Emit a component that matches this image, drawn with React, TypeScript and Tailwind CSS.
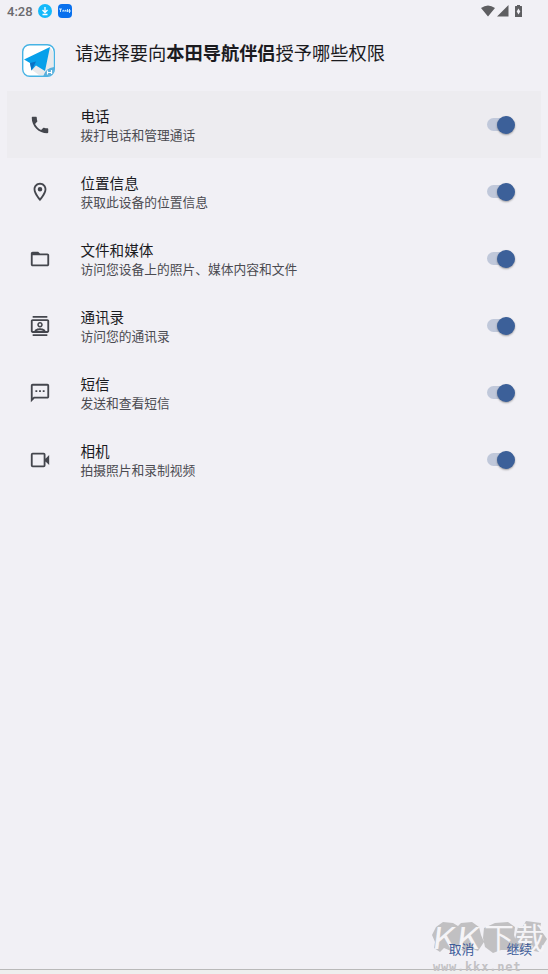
import React from 'react'

interface PermissionProps {
  title: string
  desc: string
  icon: React.ReactNode
  active?: boolean
}

function Icon(props: { d: string }) {
  return (
    <svg className="w-[22px] h-[22px] fill-[#44464d]" viewBox="0 0 24 24">
      <path fillRule="evenodd" d={props.d} />
    </svg>
  )
}

function Toggle() {
  return (
    <div className="flex items-center w-7 h-5">
      <div className="w-5 h-[13px] rounded-full bg-[#c0c8da]"></div>
      <div className="w-[18px] h-[18px] shrink-0 -ml-2.5 rounded-full bg-[#3c6099] shadow-[0_1px_2px_rgba(0,0,0,0.35)]"></div>
    </div>
  )
}

function Permission(props: PermissionProps) {
  return (
    <div
      className={`flex items-center h-[67px] mx-[7px] pl-[22px] pr-[26px] ${props.active ? 'bg-[#edecf0]' : ''}`}
    >
      {props.icon}
      <div className="flex-1 ml-[29.4px]">
        <div className="text-[14.6px] leading-5 text-[#1b1b1f]">{props.title}</div>
        <div className="text-[12.75px] leading-[18px] text-[#4b4b51]">{props.desc}</div>
      </div>
      <Toggle />
    </div>
  )
}

const permissions = [
  {
    title: '电话',
    desc: '拨打电话和管理通话',
    d: 'M6.62 10.79c1.44 2.83 3.76 5.14 6.59 6.59l2.2-2.2c.27-.27.67-.36 1.02-.24 1.12.37 2.33.57 3.57.57.55 0 1 .45 1 1V20c0 .55-.45 1-1 1-9.39 0-17-7.61-17-17 0-.55.45-1 1-1h3.5c.55 0 1 .45 1 1 0 1.25.2 2.45.57 3.57.11.35.03.74-.25 1.02l-2.2 2.2z'
  },
  {
    title: '位置信息',
    desc: '获取此设备的位置信息',
    d: 'M12 2C8.13 2 5 5.13 5 9c0 5.25 7 13 7 13s7-7.75 7-13c0-3.87-3.13-7-7-7zM7 9c0-2.76 2.24-5 5-5s5 2.24 5 5c0 2.88-2.88 7.19-5 9.88C9.92 16.21 7 11.85 7 9zM12 6.5a2.5 2.5 0 1 0 0 5 2.5 2.5 0 0 0 0-5z'
  },
  {
    title: '文件和媒体',
    desc: '访问您设备上的照片、媒体内容和文件',
    d: 'M20 6h-8l-2-2H4c-1.1 0-1.99.9-1.99 2L2 18c0 1.1.9 2 2 2h16c1.1 0 2-.9 2-2V8c0-1.1-.9-2-2-2zm0 12H4V8h16v10z'
  },
  {
    title: '通讯录',
    desc: '访问您的通讯录',
    d: 'M4 1h16v2H4zM4 21h16v2H4zM20 4.5H4c-1.1 0-2 .9-2 2v11c0 1.1.9 2 2 2h16c1.1 0 2-.9 2-2v-11c0-1.1-.9-2-2-2zM8.21 17.5c.8-.6 2.3-1 3.79-1s2.99.4 3.79 1H8.21zM20 17.5h-2c-.34-2.1-3.64-3-6-3s-5.66.9-6 3H4v-11h16v11zM12 13.5c1.7 0 3-1.3 3-3s-1.3-3-3-3-3 1.3-3 3 1.3 3 3 3zm0-4.3a1.3 1.3 0 1 1 0 2.6 1.3 1.3 0 0 1 0-2.6z'
  },
  {
    title: '短信',
    desc: '发送和查看短信',
    d: 'M20 2H4c-1.1 0-2 .9-2 2v18l4-4h14c1.1 0 2-.9 2-2V4c0-1.1-.9-2-2-2zm0 14H5.17L4 17.17V4h16v12zM7 9h2v2H7zM11 9h2v2h-2zM15 9h2v2h-2z'
  },
  {
    title: '相机',
    desc: '拍摄照片和录制视频',
    d: 'M4 4h12a2 2 0 0 1 2 2v4.5l4-4v11l-4-4V18a2 2 0 0 1-2 2H4a2 2 0 0 1-2-2V6a2 2 0 0 1 2-2zm0 2v12h12V6H4z'
  }
]

function StatusBar() {
  return (
    <div className="flex items-center h-[23px] pl-[7px] pr-[25px]">
      <div className="w-[31px] font-[Roboto,sans-serif] font-medium text-[13px] leading-4 text-[#6a6a6e]">4:28</div>
      <svg className="w-3.5 h-3.5 -mt-px" viewBox="0 0 14 14">
        <circle cx="7" cy="7" r="7" fill="#13b9fb" />
        <path d="M7 3v5M4.5 6 7 8.5 9.5 6M4.5 10.5h5" fill="none" stroke="#fff" strokeWidth="1.3" />
      </svg>
      <div className="flex items-center justify-center w-3.5 h-3.5 -mt-px ml-1.5 rounded-sm bg-[#0870ed]">
        <svg className="w-3 h-1.5" viewBox="0 0 12 6">
          <path d="M0 1h3M1.5 1v3M4 4V2l1.500 1L7 2v2M8.5 1v3M8.5 3H12M10.5 1v4" fill="none" stroke="#d9f3ff" strokeWidth="0.9" />
        </svg>
      </div>
      <svg className="w-[42px] h-3 -mt-0.5 ml-auto fill-[#5e5e61]" viewBox="0 0 42 12">
        <path d="M0 3Q7 -2 14 3L7 11.5ZM27.500 0v11.5H16ZM34.500 1H36V0h3v1h1.500q.5 0 .5.5v10q0 .5-.5.5H34.500q-.5 0-.5-.5v-10q0-.5.5-.5Z" />
        <path className="fill-[#f1f0f5]" d="M37.500 3.500 39.300 6.500 37.500 9.500 35.700 6.500Z" />
      </svg>
    </div>
  )
}

function AppLogo() {
  return (
    <svg className="w-[33px] h-[33px]" viewBox="0 0 33 33">
      <defs>
        <clipPath id="tile">
          <rect x="1" y="1" width="31" height="31" rx="6" />
        </clipPath>
      </defs>
      <rect x="0.7" y="0.7" width="31.6" height="31.6" rx="7" fill="#fff" stroke="#47b3e4" strokeWidth="1.4" />
      <g clipPath="url(#tile)">
        <path d="M28 3 31.3 8V31H17L10 26Z" fill="#e9e9eb" />
        <path d="M21 33q2-9 12-10v10Z" fill="#5aafdc" />
        <path d="M25.5 26.5v4M29.5 26v4M25.5 28.5h4" fill="none" stroke="#fff" strokeWidth="1.2" />
        <path d="M2 15.5 28 3 23 27 14 21.5 9.5 26.5 8 19Z" fill="#07a0ea" />
        <path d="M8 19 14 17.500 12.500 20.500 9.5 26.5Z" fill="#0871c4" />
      </g>
    </svg>
  )
}

function Watermark() {
  return (
    <div className="absolute left-[431px] top-[920px] w-[117px] h-[54px] pointer-events-none">
      <svg className="absolute inset-0 w-[117px] h-[54px]" viewBox="0 0 117 54">
        <path
          d="M5 7 12 2 22 3 27 6 30 3 41 2 48 7 50 15 53 22 47 31 39 28 33 32 27 26 20 31 13 28 9 32 3 28 4 22 1 15ZM53 8 64 3 77 2 84 7 83 15 86 24 81 30 70 30 62 33 54 27 52 18ZM87 7 92 6 95 1 110 3 109 9 116 19 111 27 108 32 98 30 88 32 83 25 85 15Z"
          fill="#c1c0c2"
        />
      </svg>
      <div className="absolute left-[2px] top-0 flex items-center text-[30px] leading-[32px] text-[#f5f4f7] whitespace-nowrap">
        <span className="w-6 origin-left scale-x-[1.2] -skew-x-6">K</span>
        <span className="w-[27px] origin-left scale-x-[1.2] -skew-x-6">K</span>
        <span className="w-[31px]">下</span>
        <span>载</span>
      </div>
      <div className="absolute left-[2px] top-[40px] font-['DejaVu_Sans_Mono',monospace] font-bold text-[12px] tracking-[0.8px] leading-[14px] text-[#c2c1c4]">
        www.kkx.net
      </div>
    </div>
  )
}

export default function App() {
  return (
    <div className="relative flex flex-col w-[548px] h-[974px] overflow-hidden bg-[#f1f0f5] font-['Noto_Sans_CJK_SC',sans-serif]">
      <StatusBar />
      <header className="flex h-[68px] pl-[22px] pt-[21px]">
        <AppLogo />
        <h1 className="ml-5 -mt-1.5 text-[18.24px] leading-7 text-[#1b1b1f]">
          请选择要向<span className="font-bold">本田导航伴侣</span>授予哪些权限
        </h1>
      </header>
      <main className="flex-1">
        {permissions.map((item, index) => (
          <Permission
            key={item.title}
            title={item.title}
            desc={item.desc}
            icon={<Icon d={item.d} />}
            active={index === 0}
          />
        ))}
      </main>
      <Watermark />
      <footer className="relative flex justify-end gap-8 h-[29px] pr-4 text-[12.8px] leading-5 text-[#3c5c9a]">
        <button className="h-5 -mt-px">取消</button>
        <button className="h-5 -mt-px">继续</button>
      </footer>
      <div className="h-[5px] border-t border-[#b9b9b9] bg-[#eeeeee]"></div>
    </div>
  )
}
